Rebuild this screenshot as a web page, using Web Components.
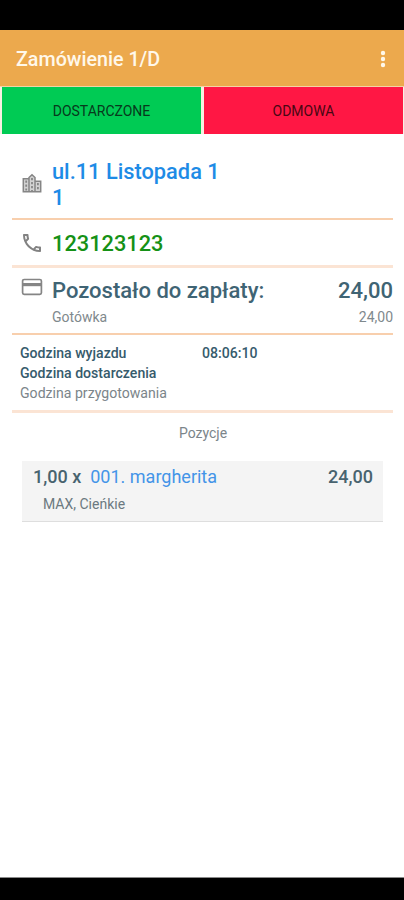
<!DOCTYPE html>
<html lang="pl">
<head>
<meta charset="utf-8">
<title>Zamówienie 1/D</title>
<style>
  html, body { margin: 0; background: #000; }
  body { font-family: Roboto, "Noto Sans", sans-serif; }
</style>
</head>
<body>
<script>
const define = (name, html) => {
  const template = document.createElement('template');
  template.innerHTML = html;
  customElements.define(name, class extends HTMLElement {
    constructor() {
      super();
      this.attachShadow({ mode: 'open' }).append(template.content.cloneNode(true));
    }
  });
};

/* Phone frame: black system bars above and below the app surface */
define('phone-screen', `
  <style>
    :host { display: grid; grid-template-rows: 30px 848px 22px; height: 900px; background: #000; overflow: hidden; }
    main { background: #fff; border-bottom: 1px solid #8a8a8a; box-sizing: border-box; grid-row: 2; }
  </style>
  <main><slot></slot></main>`);

define('app-bar', `
  <style>
    :host { display: flex; align-items: center; justify-content: space-between; height: 56px; box-sizing: border-box;
            padding: 3px 18px 0 16px; background: #eca94d; color: #fff8ea; font: 500 19.7px/28px Roboto, sans-serif; }
    svg { display: block; margin-top: -2px; }
  </style>
  <slot></slot>
  <svg width="6" height="18" viewBox="0 0 6 18" fill="#fff8ea"><circle cx="3" cy="3" r="2.2"/><circle cx="3" cy="9" r="2.2"/><circle cx="3" cy="15" r="2.2"/></svg>`);

define('action-bar', `
  <style>
    :host { display: grid; grid-template-columns: 199px 199px; gap: 3px; height: 48px; box-sizing: border-box;
            padding: 1px 1px 0 2px; background: linear-gradient(#f3d3a5 0 1px, #f8f0e2 1px); }
  </style>
  <slot></slot>`);

define('action-button', `
  <style>
    :host { display: flex; align-items: center; justify-content: center; height: 47px; box-sizing: border-box; padding-top: 1px;
            background: var(--fill); color: var(--ink); font: 400 14px/20px Roboto, sans-serif; }
  </style>
  <slot></slot>`);

define('info-row', `
  <style>
    :host { display: block; margin: 0 11px 0 12px; box-sizing: border-box; }
    .row { display: flex; box-sizing: border-box; height: var(--h); padding-left: 9px; }
    .icon { width: 31px; flex: none; padding-top: var(--icon-top, 0px); }
    .body { flex: 1; padding-top: var(--top); }
    .rule { height: var(--rule-h, 2px); background: var(--rule, #f8cfad); }
  </style>
  <div class="row"><div class="icon"><slot name="icon"></slot></div><div class="body"><slot></slot></div></div>
  <div class="rule"></div>`);

define('big-text', `
  <style>:host { display: block; font: 500 21.8px/26px Roboto, sans-serif; color: var(--ink, #3f6474); }</style>
  <slot></slot>`);

define('split-line', `
  <style>
    :host { display: flex; justify-content: space-between; white-space: pre; font: var(--font); color: var(--ink); }
  </style>
  <span><slot></slot></span><span><slot name="end"></slot></span>`);

define('city-icon', `
  <style>:host, svg { display: block; }</style>
  <svg width="22" height="22" viewBox="0 0 22 22" fill="none" stroke="#858585" stroke-width="1.5">
    <path fill="#d2d2d2" d="M2.300 6.700H8V19.700H2.300zM8 19.700V5.500l3-2.800 3 2.800v14.200zM14 9.200h5.700v10.500H14z"/>
    <path d="M5.200 8.500v10M11 6v13M16.900 11v7.500" stroke-dasharray="2.200 1.800" stroke-width="1.800"/>
  </svg>`);

define('phone-icon', `
  <style>:host, svg { display: block; }</style>
  <svg width="24" height="24" viewBox="0 0 24 24" fill="#828282"><path d="M6.54 5c.06.89.21 1.760.45 2.590l-1.200 1.200c-.41-1.200-.67-2.470-.76-3.790h1.510m9.860 12.020c.85.24 1.720.39 2.600.45v1.490c-1.320-.09-2.590-.35-3.800-.75l1.200-1.190M7.500 3H4c-.55 0-1 .45-1 1 0 9.390 7.610 17 17 17 .55 0 1-.45 1-1v-3.490c0-.55-.45-1-1-1-1.240 0-2.450-.2-3.570-.57-.1-.04-.21-.05-.31-.05-.26 0-.51.1-.71.29l-2.200 2.200c-2.830-1.450-5.150-3.760-6.590-6.590l2.200-2.200c.28-.28.36-.67.25-1.020C8.700 6.450 8.500 5.250 8.500 4c0-.55-.45-1-1-1z"/></svg>`);

define('card-icon', `
  <style>:host, svg { display: block; }</style>
  <svg width="22" height="18" viewBox="0 0 22 18" fill="none" stroke="#858585" stroke-width="1.700"><rect x="1.600" y="1.500" width="18.800" height="14.800" rx="1.600"/><path d="M1.600 6.600h18.800" stroke-width="3.200"/></svg>`);

define('time-table', `
  <style>
    :host { display: grid; grid-template-columns: 182px 1fr; margin: 0 11px 0 12px; height: 78px;
            align-content: start; box-sizing: border-box; border-bottom: 3px solid #fbe4d4; padding: 8px 0 0 8px;
            font: 500 14.100px/20.200px Roboto, sans-serif; color: #365b6c; }
  </style>
  <slot></slot>`);

define('section-title', `
  <style>:host { display: block; padding: 9px 0 0 2px; height: 48px; box-sizing: border-box; text-align: center;
    font: 400 14px/22px Roboto, sans-serif; color: #7b858a; }</style>
  <slot></slot>`);

define('order-item', `
  <style>
    :host { display: block; margin: 0 21px 0 22px; padding: 4px 10px 0 11px; height: 61px; box-sizing: border-box;
            background: #f4f4f4; border-bottom: 1px solid #dedede; }
    .head { display: flex; font: 500 18px/24px Roboto, sans-serif; color: #48636f; }
    .name { flex: 1; margin-left: 9px; font-weight: 400; color: #4394e8; }
    .note { padding: 5px 0 0 10px; font: 400 14px/20px Roboto, sans-serif; color: #6b7980; }
  </style>
  <div class="head"><slot name="qty"></slot><span class="name"><slot></slot></span><slot name="price"></slot></div>
  <div class="note"><slot name="note"></slot></div>`);
</script>

<phone-screen>
  <app-bar>Zamówienie 1/D</app-bar>
  <action-bar>
    <action-button style="--fill:#00cb54;--ink:#07391c">DOSTARCZONE</action-button>
    <action-button style="--fill:#ff1744;--ink:#480713">ODMOWA</action-button>
  </action-bar>
  <info-row style="--h:84px;--top:25px;--icon-top:38px">
    <city-icon slot="icon"></city-icon>
    <big-text style="--ink:#1e8be6">ul.11 Listopada 1<br>1</big-text>
  </info-row>
  <info-row style="--h:45px;--top:11px;--rule:#fbe4d4;--rule-h:3px;--icon-top:11px">
    <phone-icon slot="icon" style="margin-left:-1px"></phone-icon>
    <big-text style="--ink:#159116">123123123</big-text>
  </info-row>
  <info-row style="--h:65px;--top:10px;--icon-top:10px">
    <card-icon slot="icon"></card-icon>
    <split-line style="--font:500 22px/26px Roboto,sans-serif;--ink:#3f6474">Pozostało do zapłaty:<span slot="end">24,00</span></split-line>
    <split-line style="--font:400 14px/26px Roboto,sans-serif;--ink:#7f898d">Gotówka<span slot="end">24,00</span></split-line>
  </info-row>
  <time-table>
    <span>Godzina wyjazdu</span><span>08:06:10</span>
    <span>Godzina dostarczenia</span><span></span>
    <span style="font-weight:400;color:#7b858a">Godzina przygotowania</span>
  </time-table>
  <section-title>Pozycje</section-title>
  <order-item><span slot="qty">1,00 x</span>001. margherita<span slot="price">24,00</span><span slot="note">MAX, Cieńkie</span></order-item>
</phone-screen>
</body>
</html>
